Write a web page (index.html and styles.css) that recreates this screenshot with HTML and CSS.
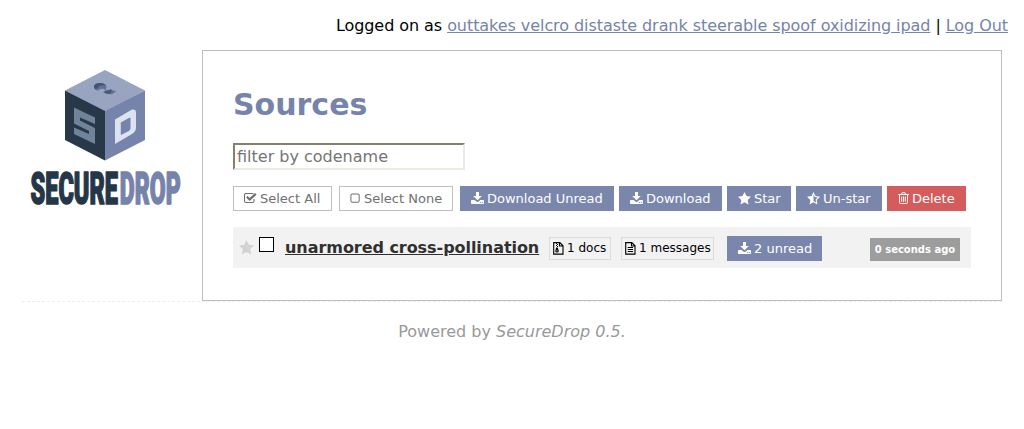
FILE: index.html
```html
<!DOCTYPE html>
<html lang="en">
<head>
<meta charset="utf-8">
<title>SecureDrop</title>
<link rel="stylesheet" href="styles.css">
</head>
<body>
<svg class="sprite" aria-hidden="true">
  <symbol id="download" viewBox="0 0 13 13"><path d="M5 0h3v4h2.800L6.500 8.300 2.200 4H5zM.8 8h2.900l1.200 1.200q1.600 1.400 3.200 0L9.300 8h2.900q.8 0 .8.800v2.400q0 .8-.8.800H.8q-.8 0-.8-.800V8.800Q0 8 .8 8zM8.800 10v1h1v-1zm2 0v1h1v-1z" fill-rule="evenodd"/></symbol>
  <symbol id="star" viewBox="0 0 13 13"><path d="M6.500 0l2 4.100 4.500.6-3.300 3.200.8 4.600-4-2.200-4 2.200.8-4.600L0 4.700l4.500-.6z"/></symbol>
  <symbol id="half" viewBox="0 0 13 13"><path fill-rule="evenodd" d="M6.500 0l2 4.100 4.500.6-3.300 3.200.8 4.600-4-2.200-4 2.200.8-4.600L0 4.700l4.500-.6zM6.500 2.500v6.600l2.600 1.400-.5-2.900 2.100-2.100-2.900-.4z"/></symbol>
  <symbol id="square" viewBox="0 0 12 13"><rect x="1" y="1.500" width="9" height="9" rx="1.500" fill="none" stroke="currentColor" stroke-width="1.100"/></symbol>
  <symbol id="check" viewBox="0 0 13 13"><path d="M10 7v2q0 1.500-1.500 1.500H2Q.5 10.500.5 9V3Q.5 1.500 2 1.500h6.500q.5 0 1 .2" fill="none" stroke="currentColor" stroke-width="1.100"/><path d="M2.800 4.800L5.700 7.600 11.800 1.800" fill="none" stroke="currentColor" stroke-width="2.200"/></symbol>
  <symbol id="trash" viewBox="0 0 11 13"><path d="M.2 2.500h10.600M3.500 2.500l.6-1.900h2.800l.6 1.900M1.500 2.500v8q0 1 1 1h6q1 0 1-1v-8M3.700 4.500v5.200M5.500 4.500v5.200M7.300 4.500v5.200" fill="none" stroke="currentColor"/></symbol>
  <symbol id="text" viewBox="0 0 11 13"><path d="M.7.600H6.800L10 3.800v8.300H.7zM6.500.600V4H10M2.700 5.500H8M2.700 7.500H8M2.700 9.500H8" fill="none" stroke="currentColor" stroke-width="1.100"/></symbol>
  <symbol id="archive" viewBox="0 0 11 13"><path d="M.7.600H6.800L10 3.800v8.300H.7zM6.500.600V4H10" fill="none" stroke="currentColor" stroke-width="1.100"/><path d="M3 1h1v1H3zM4 2h1v1H4zM3 3h1v1H3zM4 4h1v1H4zM3.200 5.500h1.600l1 3.500q0 1.500-1.800 1.500T2.300 9zM3.300 8.600v.7h1.400v-.7z" fill-rule="evenodd"/></symbol>
</svg>
<div class="login">Logged on as <a href="#">outtakes velcro distaste drank steerable spoof oxidizing ipad</a> | <a href="#">Log Out</a></div>
<div class="container">
  <div class="logo">
    <svg width="160" height="145" viewBox="26 65 160 145" role="img" aria-label="SecureDrop">
      <path d="M105 70l40 20.500-40 21-40-21z" fill="#98a4c0"/>
      <path d="M65 90.500l40 20.500v49.500L65 140z" fill="#283849"/>
      <path d="M145 90.500L105 111v49.500l40-20.500z" fill="#7683aa"/>
      <path d="M94 87q0-4 6-4 6 0 6.500 3.500 0 2-1 3l2.500 1 3-1.500 2 1.500 3.500.5-4.500 3.300-4.500-.3-3-1.700 1-2-2-1.500-4 .5-1.500 1.500Q94 90 94 87z" fill="#647197"/>
      <path d="M94 87q0-4 6-4 4 0 5.500 2l-5.500.5-3.500 3.500Q94 89 94 87z" fill="#46536f"/>
      <path d="M103 92l4.500-1.500 3-1 1.500 1.500-2.500 3-3.500-.5z" fill="#4c5878"/>
      <path d="M74 107.500l21 10v6.500l-15-6.500v3l15 7.500v16l-21-10v-6.500l15 6.500v-3l-15-7.500z" fill="#6f8399"/>
      <path fill="#dce2f0" fill-rule="evenodd" d="M115 119.500l17-10q4-.5 4 3v15q0 4-4 6.500l-17 10zM120.800 122.500v12.500l8-4q1.700-1 1.700-3v-9.500q0-1.500-1.700-.5z"/>
      <text class="word dark" x="30.500" y="204.300" textLength="87.500" lengthAdjust="spacingAndGlyphs">SECURE</text>
      <text class="word light" x="119.800" y="204.300" textLength="61" lengthAdjust="spacingAndGlyphs">DROP</text>
    </svg>
  </div>
  <main class="panel">
    <h1>Sources</h1>
    <input class="filter" type="text" placeholder="filter by codename">
    <div class="actions">
      <button class="btn plain all"><svg><use href="#check"/></svg>Select All</button>
      <button class="btn plain none"><svg class="slim"><use href="#square"/></svg>Select None</button>
      <button class="btn dlu"><svg><use href="#download"/></svg>Download Unread</button>
      <button class="btn dl"><svg><use href="#download"/></svg>Download</button>
      <button class="btn st"><svg><use href="#star"/></svg>Star</button>
      <button class="btn un"><svg><use href="#half"/></svg>Un-star</button>
      <button class="btn danger"><svg class="slim"><use href="#trash"/></svg>Delete</button>
    </div>
    <div class="source">
      <svg class="fav"><use href="#star"/></svg>
      <span class="box"></span>
      <a class="name" href="#">unarmored cross-pollination</a>
      <span class="count docs"><svg><use href="#archive"/></svg>1 docs</span>
      <span class="count msgs"><svg><use href="#text"/></svg>1 messages</span>
      <button class="btn unread"><svg><use href="#download"/></svg>2 unread</button>
      <time>0 seconds ago</time>
    </div>
  </main>
</div>
<footer>Powered by <em>SecureDrop 0.5.</em></footer>
</body>
</html>
```
FILE: styles.css
```css
* { box-sizing: border-box; }
body { margin: 0; background: #fff; color: #000; font: 16px/19px "DejaVu Sans", sans-serif; }
.sprite { display: none; }
.login { height: 50px; padding: 16px 16px 0 0; text-align: right; white-space: nowrap; letter-spacing: -.063px; }
.login a { color: #7683aa; }
.container { display: grid; grid-template-columns: 180px 800px; margin: 0 22px; }
.logo { padding: 15px 0 0 4px; }
.logo svg { display: block; overflow: visible; }
.word { font: 900 44.500px Roboto, sans-serif; stroke-width: 1.700; stroke-linejoin: round; }
.dark { fill: #253746; stroke: #253746; }
.light { fill: #7683aa; stroke: #7683aa; }
.panel { height: 251px; padding: 36px 30px 0; border: 1px solid #bfbfbf; }
h1 { margin: 0; color: #7683aa; font-size: 30px; line-height: 36px; height: 56px; }
.filter { display: block; width: 232px; height: 27px; padding: 1px 2px; border: 2px solid; border-color: #86816f #ebebe4 #ebebe4 #86816f; background: #fff; font: 16px "DejaVu Sans", sans-serif; }
.filter::placeholder { color: #757575; }
.actions { display: flex; margin-top: 16px; gap: 5px; }
.btn { display: flex; flex: none; align-items: center; height: 25px; padding: 0 0 0 11px; border: 0; background: #7a86ac; color: #fff; font: 13px "DejaVu Sans", sans-serif; white-space: nowrap; }
.btn svg { width: 13px; height: 13px; margin-right: 3px; flex: none; fill: currentColor; }
.btn .slim { width: 11px; }
.plain { padding-left: 10px; border: 1px solid #bfbfbf; background: #fff; color: #707070; margin-right: 2px; }
.all { width: 99px; }
.none { width: 114px; }
.dlu { width: 154px; }
.dl { width: 103px; }
.st { width: 64px; }
.un { width: 86px; }
.danger { width: 79px; background: #d55c5c; }
.source { display: flex; align-items: center; height: 41px; margin-top: 16px; padding: 0 11px 0 6px; background: #f2f2f2; }
.fav { width: 15px; height: 15px; fill: #d2d2d2; }
.fav use { width: 15px; height: 15px; }
.box { width: 15px; height: 15px; margin: 0 11px 6px 5px; border: 1px solid #000; background: #fff; }
.name { width: 264px; color: #303030; font-weight: bold; letter-spacing: -.05px; }
.count { display: flex; align-items: center; height: 23px; padding-left: 3px; border: 1px solid #dcdcdc; font-size: 12px; white-space: nowrap; margin-top: 2px; }
.count svg { width: 11px; height: 13px; margin-right: 3px; fill: currentColor; }
.docs { width: 62px; }
.msgs { width: 93px; margin-left: 10px; }
.unread { width: 95px; margin: 1px 0 0 13px; }
time { width: 90px; height: 23px; margin: 3px 0 0 auto; background: #9d9d9d; color: #fff; font-size: 10px; font-weight: bold; line-height: 23px; text-align: center; white-space: nowrap; }
footer { margin: 0 22px; padding-top: 20px; border-top: 1px dashed #eee; color: #999; text-align: center; }
```
